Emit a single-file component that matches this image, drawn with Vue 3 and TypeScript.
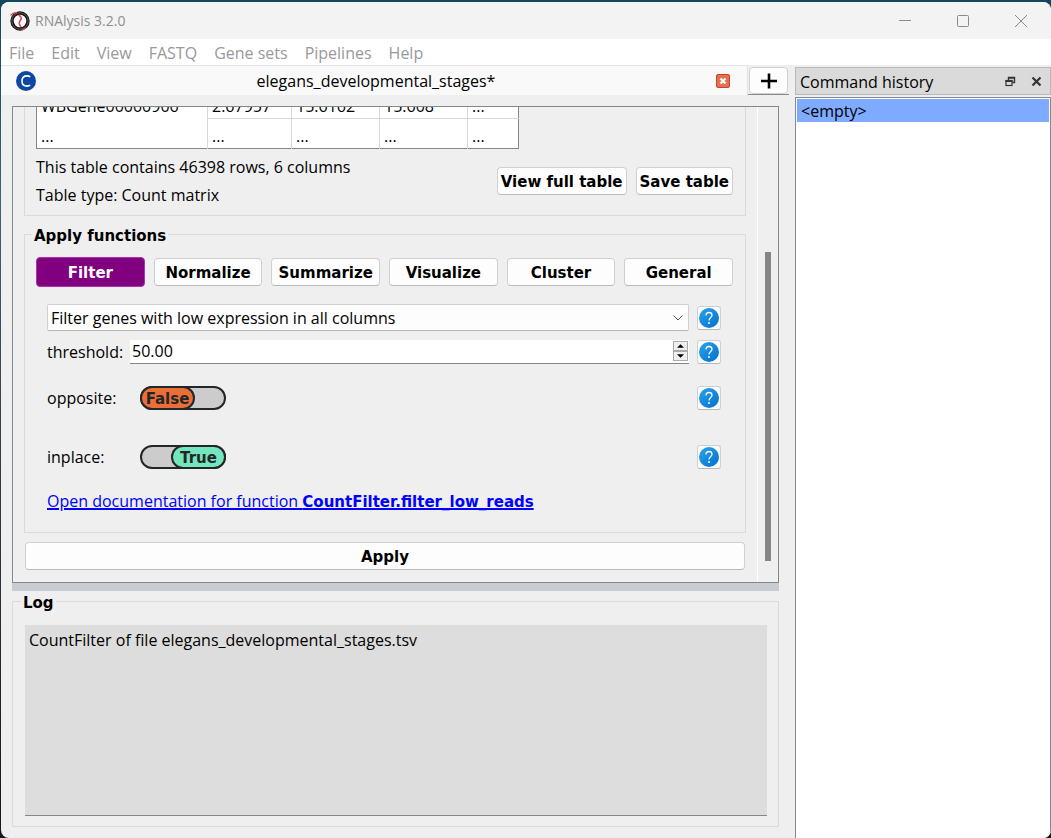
<script setup lang="ts">
import { ref } from 'vue'

const menus: string[] = ['File', 'Edit', 'View', 'FASTQ', 'Gene sets', 'Pipelines', 'Help']
const actions: string[] = ['Filter', 'Normalize', 'Summarize', 'Visualize', 'Cluster', 'General']
const rows: string[][] = [
  ['WBGene00000906', '2.67957', '15.6162', '15.608', '...'],
  ['...', '...', '...', '...', '...'],
]
const activeAction = ref('Filter')
const chosenFunction = ref('Filter genes with low expression in all columns')
const threshold = ref(50)
const opposite = ref(false)
const inplace = ref(true)
</script>

<template>
  <div class="desktop">
    <div class="window">
      <header class="titlebar">
        <svg class="logo" viewBox="0 0 20 20" aria-hidden="true">
          <circle cx="10" cy="10" r="8" fill="#fff" stroke="#1a1214" stroke-width="3.4" />
          <circle cx="10" cy="10" r="8.2" fill="none" stroke="#8c8688" stroke-width="0.6" />
          <path d="M0.500 4.500C2 2.500 4 1.500 7 1.600" fill="none" stroke="#e0475a" stroke-width="1.200" />
          <path d="M8.500 4C12.500 6 11.500 8 10 10S9.500 14 11 16" fill="none" stroke="#e0475a" stroke-width="1.600" />
          <path d="M12 19L16 17" stroke="#e0475a" stroke-width="1.200" />
        </svg>
        <span class="app-name">RNAlysis 3.2.0</span>
        <div class="window-buttons">
          <button type="button" aria-label="Minimize">
            <svg viewBox="0 0 14 14"><path d="M1 6.500H13" /></svg>
          </button>
          <button type="button" aria-label="Maximize">
            <svg viewBox="0 0 14 14"><rect x="1.500" y="1.500" width="11" height="11" rx="1" /></svg>
          </button>
          <button type="button" aria-label="Close">
            <svg viewBox="0 0 14 14"><path d="M1 1L13 13M13 1L1 13" /></svg>
          </button>
        </div>
      </header>

      <nav class="menubar">
        <button v-for="menu in menus" :key="menu" type="button">{{ menu }}</button>
      </nav>

      <div class="body">
        <main class="workspace">
          <div class="tabs">
            <div class="tab">
              <svg class="tab-icon" viewBox="0 0 20 20" aria-hidden="true">
                <circle cx="10" cy="10" r="10" fill="#0d47a1" />
                <path d="M14.200 5.800C13.200 5.100 12.300 4.900 11.200 4.900C8 4.900 6 7 6 10S8 15.100 11.200 15.100C12.300 15.100 13.200 14.900 14.200 14.200" fill="none" stroke="#fff" stroke-width="1.600" />
              </svg>
              <span class="tab-name">elegans_developmental_stages*</span>
              <button class="tab-close" type="button" aria-label="Close tab">
                <svg viewBox="0 0 14 14">
                  <rect x="0.500" y="0.500" width="13" height="13" rx="1.500" fill="#e2714f" stroke="#d0402a" />
                  <path d="M4.500 4.500L9.500 9.500M9.500 4.500L4.500 9.500" stroke="#fff" stroke-width="2.200" />
                </svg>
              </button>
            </div>
            <div class="tab-add">
              <button type="button" aria-label="New tab">
                <svg viewBox="0 0 16 16"><path d="M0 8H16M8 0.500V15.500" stroke="#000" stroke-width="2.600" /></svg>
              </button>
            </div>
          </div>

          <div class="panes">
            <section class="scroll-area">
              <div class="scroll-content">
                <section class="group data-group">
                  <table class="preview">
                    <colgroup>
                      <col class="c-name" /><col class="c-a" /><col class="c-b" /><col class="c-b" /><col class="c-d" />
                    </colgroup>
                    <tbody>
                      <tr v-for="(row, r) in rows" :key="r">
                        <th scope="row">{{ row[0] }}</th>
                        <td v-for="(cell, c) in row.slice(1)" :key="c">{{ cell }}</td>
                      </tr>
                    </tbody>
                  </table>
                  <div class="summary">
                    <div class="summary-text">
                      <p>This table contains 46398 rows, 6 columns</p>
                      <p>Table type: Count matrix</p>
                    </div>
                    <button class="push" type="button">View full table</button>
                    <button class="push" type="button">Save table</button>
                  </div>
                </section>

                <fieldset class="group functions">
                  <legend>Apply functions</legend>
                  <div class="actions">
                    <button
                      v-for="action in actions"
                      :key="action"
                      type="button"
                      class="push"
                      :class="{ active: action === activeAction }"
                      @click="activeAction = action"
                    >{{ action }}</button>
                  </div>
                  <div class="params">
                    <div class="param">
                      <div class="combo">
                        <select v-model="chosenFunction" aria-label="Function">
                          <option>Filter genes with low expression in all columns</option>
                        </select>
                        <svg class="chevron" viewBox="0 0 10 6" aria-hidden="true"><path d="M0.500 0.500L5 5L9.500 0.500" /></svg>
                      </div>
                      <button class="help" type="button" aria-label="Help on function">
                        <svg viewBox="0 0 20 20"><use href="#help-mark" /></svg>
                      </button>
                    </div>
                    <div class="param">
                      <label for="threshold">threshold:</label>
                      <div class="spin">
                        <input id="threshold" type="text" :value="threshold.toFixed(2)" />
                        <div class="steps">
                          <button type="button" aria-label="Increase" @click="threshold++">
                            <svg viewBox="0 0 8 4"><path d="M0 4L4 0L8 4Z" /></svg>
                          </button>
                          <button type="button" aria-label="Decrease" @click="threshold--">
                            <svg viewBox="0 0 8 4"><path d="M0 0L4 4L8 0Z" /></svg>
                          </button>
                        </div>
                      </div>
                      <button class="help" type="button" aria-label="Help on threshold">
                        <svg viewBox="0 0 20 20"><use href="#help-mark" /></svg>
                      </button>
                    </div>
                    <div class="param tall">
                      <label for="opposite">opposite:</label>
                      <label class="switch" :class="{ on: opposite }">
                        <input id="opposite" v-model="opposite" type="checkbox" />
                        <span class="knob">{{ opposite ? 'True' : 'False' }}</span>
                      </label>
                      <button class="help" type="button" aria-label="Help on opposite">
                        <svg viewBox="0 0 20 20"><use href="#help-mark" /></svg>
                      </button>
                    </div>
                    <div class="param tall">
                      <label for="inplace">inplace:</label>
                      <label class="switch" :class="{ on: inplace }">
                        <input id="inplace" v-model="inplace" type="checkbox" />
                        <span class="knob">{{ inplace ? 'True' : 'False' }}</span>
                      </label>
                      <button class="help" type="button" aria-label="Help on inplace">
                        <svg viewBox="0 0 20 20"><use href="#help-mark" /></svg>
                      </button>
                    </div>
                    <a class="doc" href="#docs">Open documentation for function <b>CountFilter.filter_low_reads</b></a>
                  </div>
                </fieldset>

                <button class="push apply" type="button">Apply</button>
              </div>
              <div class="scrollbar"><div class="thumb"></div></div>
            </section>

            <div class="splitter"></div>

            <fieldset class="group log">
              <legend>Log</legend>
              <div class="log-text">CountFilter of file elegans_developmental_stages.tsv</div>
            </fieldset>
          </div>
        </main>

        <aside class="dock">
          <header class="dock-title">
            <span>Command history</span>
            <button type="button" aria-label="Float">
              <svg viewBox="0 0 11 11">
                <path d="M3.500 5V1.500H9.500V6.500H7.500M3 2H10" fill="none" stroke="#333" stroke-width="1.400" />
                <rect x="1" y="4.500" width="6" height="5" fill="#dadada" stroke="#333" stroke-width="1.200" />
                <path d="M0.500 5H7.500" stroke="#333" stroke-width="1.800" />
              </svg>
            </button>
            <button type="button" aria-label="Close panel">
              <svg viewBox="0 0 11 11"><path d="M1.500 1.500L9.500 9.500M9.500 1.500L1.500 9.500" stroke="#333" stroke-width="2.200" /></svg>
            </button>
          </header>
          <ul class="history">
            <li>&lt;empty&gt;</li>
          </ul>
        </aside>
      </div>
    </div>

    <svg class="defs" aria-hidden="true">
      <defs>
        <linearGradient id="help-blue" x1="0" y1="0" x2="1" y2="1">
          <stop offset="0" stop-color="#2aa4ea" />
          <stop offset="1" stop-color="#006fd0" />
        </linearGradient>
        <symbol id="help-mark" viewBox="0 0 20 20">
          <circle cx="10" cy="10" r="10" fill="url(#help-blue)" />
          <path d="M7 7.500C7 5.500 8.300 4.500 10 4.500S13 5.600 13 7.300C13 9.500 10 9.600 10 12.500" fill="none" stroke="#fff" stroke-width="1.300" />
          <circle cx="10" cy="15" r="1" fill="#fff" />
        </symbol>
      </defs>
    </svg>
  </div>
</template>

<style>
html,
body,
#app {
  height: 100%;
}
body {
  margin: 0;
}
</style>

<style scoped>
* {
  box-sizing: border-box;
}
.desktop {
  height: 100%;
  padding: 2px 0 0 1px;
  background: linear-gradient(#12465a, #3f6377 24%, #3b4048 50%, #15181c);
  font: 16px/20px "Open Sans", "Noto Sans", sans-serif;
  color: #000;
}
button,
input,
select {
  margin: 0;
  padding: 0;
  border: 0;
  background: none;
  font: inherit;
  color: inherit;
}
svg {
  display: block;
}
.defs {
  position: absolute;
  width: 0;
  height: 0;
}
.window {
  display: flex;
  flex-direction: column;
  height: 100%;
  overflow: hidden;
  border-radius: 8px;
  background: #efefef;
}
.titlebar {
  display: flex;
  flex: none;
  align-items: center;
  gap: 5px;
  height: 37px;
  padding: 0 23px 0 9px;
  background: #f3f3f3;
}
.logo {
  width: 20px;
  height: 20px;
}
.app-name {
  flex: 1;
  font: 14px/20px "Open Sans", sans-serif;
  color: #8f8f8f;
}
.window-buttons {
  display: flex;
  gap: 44px;
}
.window-buttons button,
.window-buttons svg {
  width: 14px;
  height: 14px;
}
.window-buttons path,
.window-buttons rect {
  fill: none;
  stroke: #8a8a8a;
}
.menubar {
  display: flex;
  flex: none;
  gap: 17px;
  height: 26px;
  padding: 2px 8px 0;
  background: #fff;
  color: #999;
}
.menubar button {
  height: 24px;
}
.body {
  display: flex;
  flex: 1;
  min-height: 0;
}
.workspace {
  display: flex;
  flex: 1;
  flex-direction: column;
  min-width: 0;
}
.tabs {
  display: flex;
  flex: none;
  height: 30px;
  padding-right: 6px;
}
.tab {
  display: flex;
  flex: 1;
  align-items: center;
  padding: 0 17px 0 15px;
  border-top: 1px solid #e3e3e3;
  border-right: 1px solid #e3e3e3;
  background: #f9f9f9;
}
.tab-icon {
  width: 20px;
  height: 20px;
}
.tab-name {
  flex: 1;
  text-align: center;
}
.tab-close,
.tab-close svg {
  width: 14px;
  height: 14px;
}
.tab-add {
  width: 41px;
  padding: 2px 1px 0;
  border-bottom: 1px solid #8a8a8a;
}
.tab-add button {
  display: grid;
  place-items: center;
  width: 100%;
  height: 27px;
  border: 1px solid #d0d0d0;
  border-radius: 4px;
  background: #fdfdfd;
}
.tab-add svg {
  width: 16px;
  height: 16px;
}
.panes {
  display: grid;
  flex: 1;
  grid-template-rows: minmax(0, 101fr) 8px minmax(0, 50fr);
  min-height: 0;
  padding: 11px 16px 11px 11px;
}
.scroll-area {
  display: flex;
  min-height: 0;
  overflow: hidden;
  border: 1px solid #828790;
}
.scroll-content {
  display: flex;
  flex: 1;
  flex-direction: column;
  justify-content: flex-end;
  min-width: 0;
  padding: 0 11px 12px;
}
.scrollbar {
  display: flex;
  flex: none;
  flex-direction: column;
  justify-content: flex-end;
  width: 21px;
  padding: 0 7px 21px;
  border-left: 1px solid #fff;
}
.thumb {
  width: 6px;
  height: 68%;
  background: #858585;
}
.group {
  min-width: 0;
  margin: 0;
  border: 1px solid #dadada;
}
b,
legend,
.push,
.knob {
  font-family: "DejaVu Sans", sans-serif;
  font-size: 15px;
  font-weight: bold;
}
legend {
  margin-left: -4px;
  padding: 2px 2px 0;
}
.data-group {
  flex: none;
  padding: 11px 12px 6px 11px;
}
.preview {
  width: 483px;
  table-layout: fixed;
  border: 1px solid #828790;
  border-collapse: collapse;
  background: #fff;
}
.c-name {
  width: 171px;
}
.c-a {
  width: 84px;
}
.c-b {
  width: 88px;
}
.preview th,
.preview td {
  height: 30px;
  padding: 5px 4px 0;
  border-left: 1px solid #d8d8d8;
  font-weight: normal;
  text-align: left;
}
.preview td {
  border-top: 1px solid #d8d8d8;
}
.preview th {
  border-left-color: #828790;
}
.summary {
  display: flex;
  align-items: center;
  gap: 9px;
  padding-top: 4px;
}
.summary-text {
  flex: 1;
}
.summary p {
  margin: 0;
  line-height: 28px;
}
.push {
  height: 28px;
  padding: 3px 3px 0;
  border: 1px solid #d0d0d0;
  border-bottom-color: #bababa;
  border-radius: 4px;
  background: #fdfdfd;
}
.functions {
  flex: none;
  margin-top: 8px;
  padding: 11px 12px 20px 11px;
}
.actions {
  display: flex;
  align-items: center;
  gap: 9px;
}
.actions .push {
  flex: 1;
}
.actions .active {
  height: 30px;
  border-color: #b030b0;
  background: #800080;
  color: #fff;
}
.params {
  display: flex;
  flex-direction: column;
  padding: 14px 12px 0 11px;
}
.param {
  display: flex;
  align-items: center;
  gap: 8px;
  height: 34px;
}
.param > label:first-child {
  width: 75px;
}
.tall {
  height: 59px;
}
.combo {
  position: relative;
  flex: 1;
}
.combo select {
  display: block;
  width: 100%;
  height: 27px;
  padding: 1px 3px 0;
  appearance: none;
  border: 1px solid #d0d0d0;
  border-bottom-color: #b5b5b5;
  border-radius: 2px;
  background: #fdfdfd;
}
.chevron {
  position: absolute;
  top: 11px;
  right: 6px;
  width: 10px;
  height: 6px;
  pointer-events: none;
}
.chevron path {
  fill: none;
  stroke: #555;
}
.help {
  display: grid;
  place-items: center;
  flex: none;
  width: 24px;
  height: 24px;
  border: 1px solid #d0d0d0;
  border-bottom-color: #b8b8b8;
  border-radius: 3px;
  background: #fdfdfd;
}
.help svg {
  width: 20px;
  height: 20px;
}
.spin {
  display: flex;
  flex: 1;
  align-items: center;
  height: 24px;
  padding-right: 1px;
  border-bottom: 1px solid #868686;
  background: #fff;
}
.spin input {
  flex: 1;
  min-width: 0;
  padding-left: 2px;
}
.steps {
  display: flex;
  flex-direction: column;
  width: 15px;
}
.steps button {
  display: grid;
  place-items: center;
  height: 10px;
  border: 1px solid #aaa;
  background: #efefef;
}
.steps svg {
  width: 7px;
  height: 4px;
}
.switch {
  display: flex;
  width: 86px;
  height: 24px;
  margin: 0 auto 0 10px;
  border: 2px solid #232629;
  border-radius: 12px;
  background: #ccc;
}
.switch input {
  position: absolute;
  opacity: 0;
}
.knob {
  width: 55px;
  margin: -2px;
  border: 2px solid #232629;
  border-radius: 12px;
  background: #eb6e37;
  color: #232629;
  line-height: 22px;
  text-align: center;
}
.on {
  justify-content: flex-end;
}
.on .knob {
  background: #73e6be;
}
.doc {
  margin-top: 4px;
  color: #00f;
  text-decoration-thickness: 2px;
}
.apply {
  flex: none;
  margin: 9px 1px 0;
}
.splitter {
  background: #c8ccd0;
}
.log {
  display: flex;
  flex-direction: column;
  min-height: 0;
  padding: 12px 11px 10px 12px;
}
.log-text {
  height: 100%;
  padding: 5px 4px;
  border-bottom: 1px solid #868686;
  background: #ddd;
}
.dock {
  display: flex;
  flex-direction: column;
  width: 256px;
  padding-top: 2px;
}
.dock-title {
  display: flex;
  align-items: center;
  gap: 15px;
  height: 28px;
  padding: 0 8px 0 4px;
  border: 1px solid #b8b8b8;
  background: #dadada;
}
.dock-title span {
  flex: 1;
  padding-top: 2px;
}
.dock-title svg {
  width: 11px;
  height: 11px;
}
.history {
  flex: 1;
  margin: 2px 0 0;
  padding: 1px;
  border: 1px solid #828790;
  border-bottom: 0;
  background: #fff;
  list-style: none;
}
.history li {
  height: 23px;
  padding: 2px 4px;
  background: #7eaaff;
}
</style>
